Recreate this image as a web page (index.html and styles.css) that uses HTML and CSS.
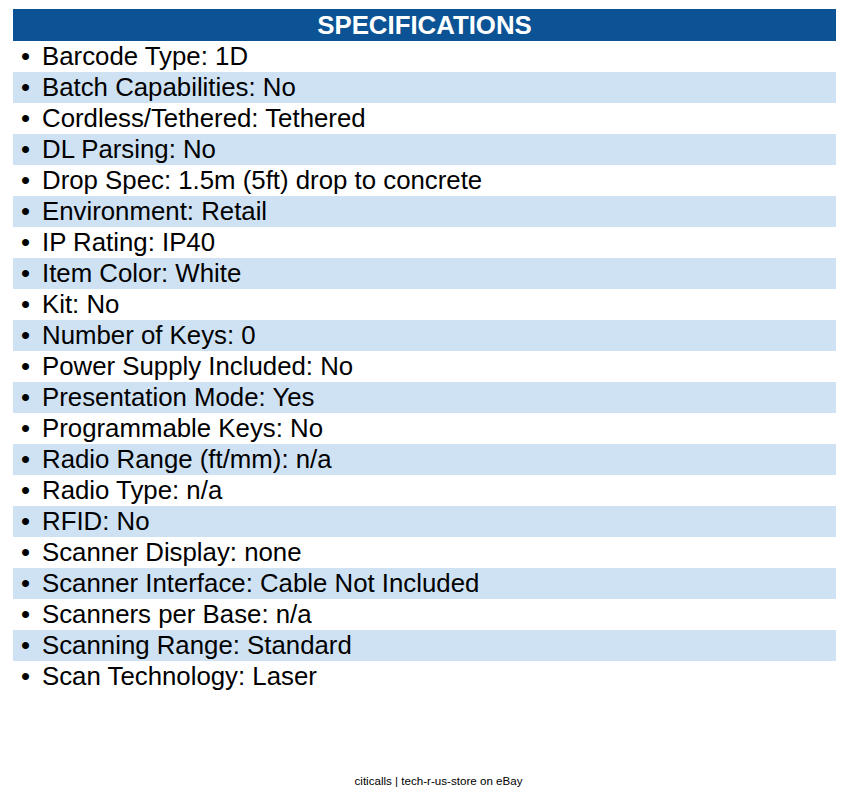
FILE: index.html
```html
<!DOCTYPE html>
<html>
<head>
<meta charset="utf-8">
<link rel="stylesheet" href="styles.css">
</head>
<body>
<div class="page">
  <div class="specs">
    <div class="specs-title">SPECIFICATIONS</div>
    <ul class="spec-list">
      <li class="spec">Barcode Type: 1D</li>
      <li class="spec">Batch Capabilities: No</li>
      <li class="spec">Cordless/Tethered: Tethered</li>
      <li class="spec">DL Parsing: No</li>
      <li class="spec">Drop Spec: 1.5m (5ft) drop to concrete</li>
      <li class="spec">Environment: Retail</li>
      <li class="spec">IP Rating: IP40</li>
      <li class="spec">Item Color: White</li>
      <li class="spec">Kit: No</li>
      <li class="spec">Number of Keys: 0</li>
      <li class="spec">Power Supply Included: No</li>
      <li class="spec">Presentation Mode: Yes</li>
      <li class="spec">Programmable Keys: No</li>
      <li class="spec">Radio Range (ft/mm): n/a</li>
      <li class="spec">Radio Type: n/a</li>
      <li class="spec">RFID: No</li>
      <li class="spec">Scanner Display: none</li>
      <li class="spec">Scanner Interface: Cable Not Included</li>
      <li class="spec">Scanners per Base: n/a</li>
      <li class="spec">Scanning Range: Standard</li>
      <li class="spec">Scan Technology: Laser</li>
    </ul>
  </div>
  <div class="footer">citicalls | tech-r-us-store on eBay</div>
</div>
</body>
</html>
```
FILE: styles.css
```css
html, body {
  margin: 0;
  padding: 0;
  background: #ffffff;
}
body {
  font-family: "Liberation Sans", Arial, sans-serif;
  color: #000000;
}
.page {
  width: 847px;
  height: 798px;
  display: flex;
  flex-direction: column;
  padding: 9px 11px 0 13px;
  box-sizing: border-box;
}
.specs {
  display: flex;
  flex-direction: column;
}
.specs-title {
  height: 32px;
  background: #0b5394;
  color: #ffffff;
  font-weight: bold;
  font-size: 25.8px;
  line-height: 32px;
  text-align: center;
}
.spec-list {
  list-style: none;
  margin: 0;
  padding: 0;
}
.spec {
  height: 31px;
  line-height: 31px;
  font-size: 25.8px;
  padding-left: 8px;
  display: flex;
  white-space: nowrap;
}
.spec::before {
  content: "•";
  width: 21px;
  flex: none;
}
.spec:nth-child(even) {
  background: #cfe2f3;
}
.footer {
  margin-top: auto;
  margin-bottom: 10px;
  text-align: center;
  font-size: 11.6px;
  line-height: 14px;
  padding-left: 28px;
}
```
